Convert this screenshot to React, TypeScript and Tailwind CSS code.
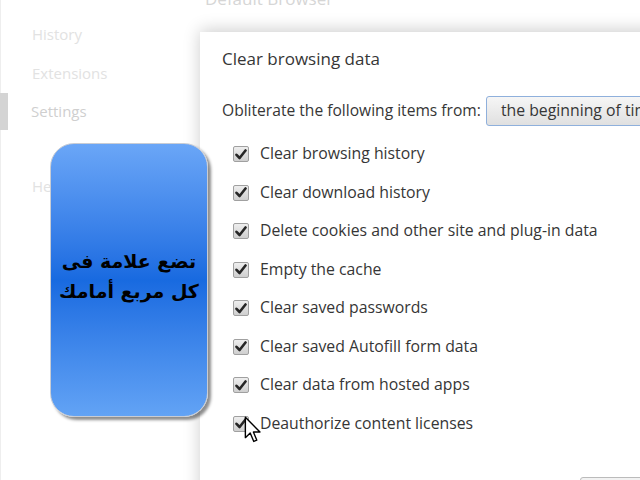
import React from "react";

const items = [
  "Clear browsing history",
  "Clear download history",
  "Delete cookies and other site and plug-in data",
  "Empty the cache",
  "Clear saved passwords",
  "Clear saved Autofill form data",
  "Clear data from hosted apps",
  "Deauthorize content licenses",
];

function CheckBox() {
  return (
    <div className="w-[16px] h-[16px] rounded-[2px] border border-[#a0a0a0] bg-gradient-to-b from-[#eeeeee] to-[#cfcfcf] flex items-center justify-center shrink-0">
      <svg width="12" height="11" viewBox="0 0 12 11">
        <path d="M1.5 5.8 L4.6 9 L10.5 1.5" fill="none" stroke="#262626" strokeWidth="2.6" strokeLinecap="round" strokeLinejoin="round" />
      </svg>
    </div>
  );
}

export default function App() {
  return (
    <div
      className="relative w-[640px] h-[480px] overflow-hidden bg-white flex"
      style={{ fontFamily: '"Open Sans", "DejaVu Sans", sans-serif' }}
    >
      {/* sidebar */}
      <div className="w-[200px] shrink-0 border-l border-[#eeeeee] pt-[15px] flex flex-col">
        <div className="h-[38.5px] pl-[31px] flex items-center text-[15px] text-[#e2e2e2]">History</div>
        <div className="h-[38.5px] pl-[31px] flex items-center text-[15px] text-[#e2e2e2]">Extensions</div>
        <div className="h-[38.5px] flex items-center text-[15px] text-[#cfcfcf]">
          <div className="w-[8px] h-[37px] bg-[#d4d4d4] mr-[23px] -ml-px" />
          Settings
        </div>
        <div className="h-[36px]" />
        <div className="h-[38.5px] pl-[31px] flex items-center text-[15px] text-[#e2e2e2]">Help</div>
      </div>

      {/* main */}
      <div className="flex-1 pl-[5px] -mt-[13px]">
        <div className="text-[17px] text-[#d6d6d6] leading-[24px]">Default Browser</div>
      </div>

      {/* dialog */}
      <div className="absolute left-[200px] top-[32px] w-[460px] h-[470px] bg-white shadow-[0_-2px_16px_rgba(0,0,0,0.2)] pl-[22px] pt-[15px] text-[#363636]">
        <div className="text-[17px] leading-[24px]">Clear browsing data</div>
        <div className="mt-[25px] h-[30px] flex items-center text-[15.8px] whitespace-nowrap">
          <span className="text-[15.6px]">Obliterate the following items from:</span>
          <div className="ml-[5px] h-[30px] w-[200px] shrink-0 rounded-[3px] border border-[#8fb0dc] bg-gradient-to-b from-[#f6f6f6] to-[#e0e0e0] pl-[14px] flex items-center whitespace-nowrap">
            the beginning of time
          </div>
        </div>
        <div className="mt-[9px] flex flex-col">
          {items.map((t) => (
            <div key={t} className="h-[38.5px] flex items-center text-[15.8px] pl-[11px]">
              <CheckBox />
              <span className="ml-[11px] whitespace-nowrap">{t}</span>
            </div>
          ))}
        </div>
        <div className="absolute left-[380px] top-[445px] w-[100px] h-[30px] rounded-[3px] border border-[#bbbbbb] bg-[#f2f2f2]" />
      </div>

      {/* annotation box */}
      <div className="absolute left-[50px] top-[143px] w-[158px] h-[274px] rounded-[24px] border-[1.5px] border-[#c8ccd4] bg-gradient-to-b from-[#6aa6f7] via-[#186ae0] to-[#62a3f5] shadow-[3px_3px_3px_rgba(0,0,0,0.45)] flex flex-col items-center justify-center pb-[8px]">
        <div
          dir="rtl"
          className="text-center text-black font-bold text-[19px] leading-[30px] whitespace-nowrap"
          style={{ fontFamily: '"DejaVu Sans", sans-serif' }}
        >
          <div>تضع علامة فى</div>
          <div>كل مربع أمامك</div>
        </div>
      </div>

      {/* cursor */}
      <svg className="absolute left-[244px] top-[416px]" width="18" height="28" viewBox="0 0 14 22">
        <path d="M1 1 L1 17 L4.8 13.4 L7.6 20 L10 19 L7.3 12.6 L12.5 12.6 Z" fill="white" stroke="black" strokeWidth="1.1" strokeLinejoin="round" />
      </svg>
    </div>
  );
}
